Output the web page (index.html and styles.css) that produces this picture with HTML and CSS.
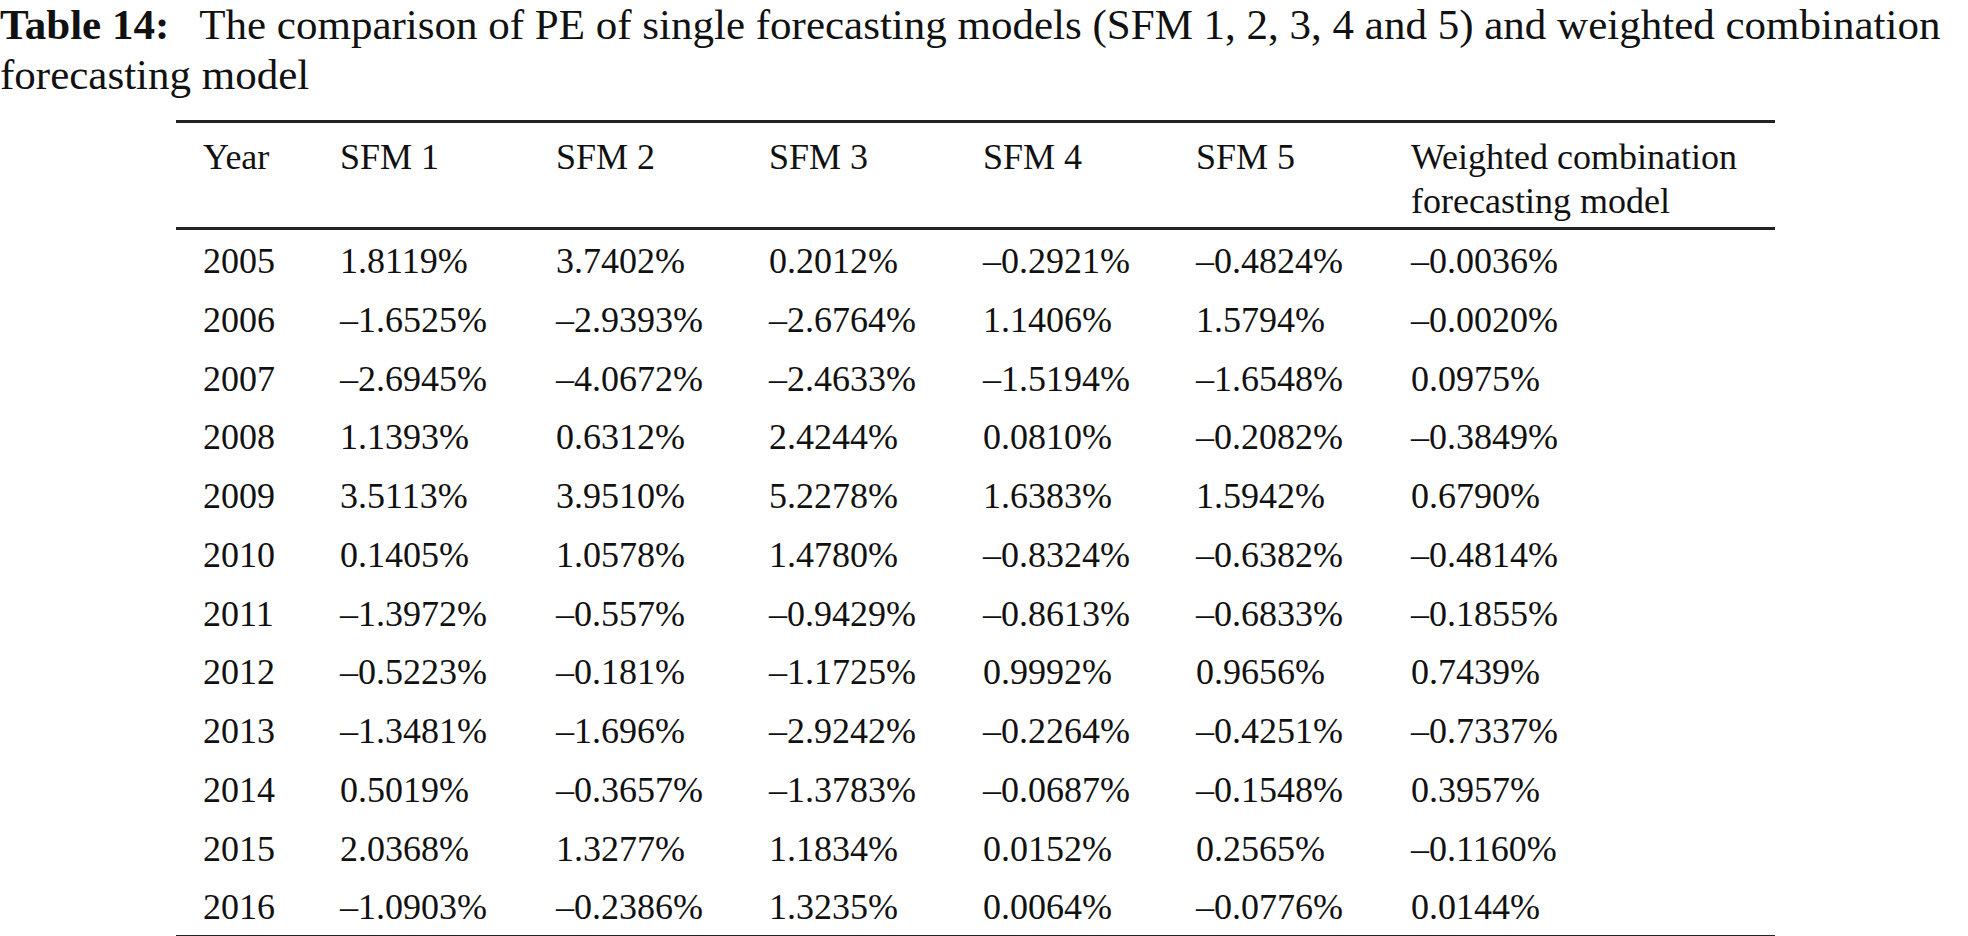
FILE: index.html
```html
<!DOCTYPE html>
<html>
<head>
<meta charset="utf-8">
<link rel="stylesheet" href="styles.css">
</head>
<body>
<div class="page">
  <p class="caption"><b class="label">Table 14:</b><span class="title">The comparison of PE of single forecasting models (SFM 1, 2, 3, 4 and 5) and weighted combination forecasting model</span></p>
  <table class="data">
    <colgroup>
      <col class="c-year"><col class="c-sfm1"><col class="c-sfm2"><col class="c-sfm3"><col class="c-sfm4"><col class="c-sfm5"><col class="c-wc">
    </colgroup>
    <thead>
      <tr><th>Year</th><th>SFM 1</th><th>SFM 2</th><th>SFM 3</th><th>SFM 4</th><th>SFM 5</th><th>Weighted combination forecasting model</th></tr>
    </thead>
    <tbody>
      <tr><td>2005</td><td>1.8119%</td><td>3.7402%</td><td>0.2012%</td><td>–0.2921%</td><td>–0.4824%</td><td>–0.0036%</td></tr>
      <tr><td>2006</td><td>–1.6525%</td><td>–2.9393%</td><td>–2.6764%</td><td>1.1406%</td><td>1.5794%</td><td>–0.0020%</td></tr>
      <tr><td>2007</td><td>–2.6945%</td><td>–4.0672%</td><td>–2.4633%</td><td>–1.5194%</td><td>–1.6548%</td><td>0.0975%</td></tr>
      <tr><td>2008</td><td>1.1393%</td><td>0.6312%</td><td>2.4244%</td><td>0.0810%</td><td>–0.2082%</td><td>–0.3849%</td></tr>
      <tr><td>2009</td><td>3.5113%</td><td>3.9510%</td><td>5.2278%</td><td>1.6383%</td><td>1.5942%</td><td>0.6790%</td></tr>
      <tr><td>2010</td><td>0.1405%</td><td>1.0578%</td><td>1.4780%</td><td>–0.8324%</td><td>–0.6382%</td><td>–0.4814%</td></tr>
      <tr><td>2011</td><td>–1.3972%</td><td>–0.557%</td><td>–0.9429%</td><td>–0.8613%</td><td>–0.6833%</td><td>–0.1855%</td></tr>
      <tr><td>2012</td><td>–0.5223%</td><td>–0.181%</td><td>–1.1725%</td><td>0.9992%</td><td>0.9656%</td><td>0.7439%</td></tr>
      <tr><td>2013</td><td>–1.3481%</td><td>–1.696%</td><td>–2.9242%</td><td>–0.2264%</td><td>–0.4251%</td><td>–0.7337%</td></tr>
      <tr><td>2014</td><td>0.5019%</td><td>–0.3657%</td><td>–1.3783%</td><td>–0.0687%</td><td>–0.1548%</td><td>0.3957%</td></tr>
      <tr><td>2015</td><td>2.0368%</td><td>1.3277%</td><td>1.1834%</td><td>0.0152%</td><td>0.2565%</td><td>–0.1160%</td></tr>
      <tr><td>2016</td><td>–1.0903%</td><td>–0.2386%</td><td>1.3235%</td><td>0.0064%</td><td>–0.0776%</td><td>0.0144%</td></tr>
    </tbody>
  </table>
</div>
</body>
</html>
```
FILE: styles.css
```css
html, body {
  margin: 0;
  padding: 0;
  background: #ffffff;
}
body {
  font-family: "Liberation Serif", "Times New Roman", serif;
  color: #111111;
}
.page {
  width: 1968px;
  height: 936px;
  overflow: hidden;
}
.caption {
  margin: 0;
  font-size: 43px;
  line-height: 50px;
}
.caption .label {
  font-weight: bold;
  margin-right: 30px;
}
.data {
  margin: 20px 0 0 176px;
  border-collapse: collapse;
  table-layout: fixed;
  width: 1599px;
  font-size: 36px;
  border-top: 3px solid #222222;
  border-bottom: 3px solid #222222;
}
.c-year { width: 164px; }
.c-sfm1 { width: 216px; }
.c-sfm2 { width: 213px; }
.c-sfm3 { width: 214px; }
.c-sfm4 { width: 213px; }
.c-sfm5 { width: 215px; }
.c-wc { width: 364px; }
.data th {
  font-weight: normal;
  text-align: left;
  vertical-align: top;
  line-height: 44px;
  padding: 12px 0 4px 0;
  border-bottom: 3px solid #222222;
}
.data td {
  line-height: 44px;
  padding: 9px 0 5.75px 0;
  white-space: nowrap;
}
.data th:first-child,
.data td:first-child {
  padding-left: 27px;
}
```
